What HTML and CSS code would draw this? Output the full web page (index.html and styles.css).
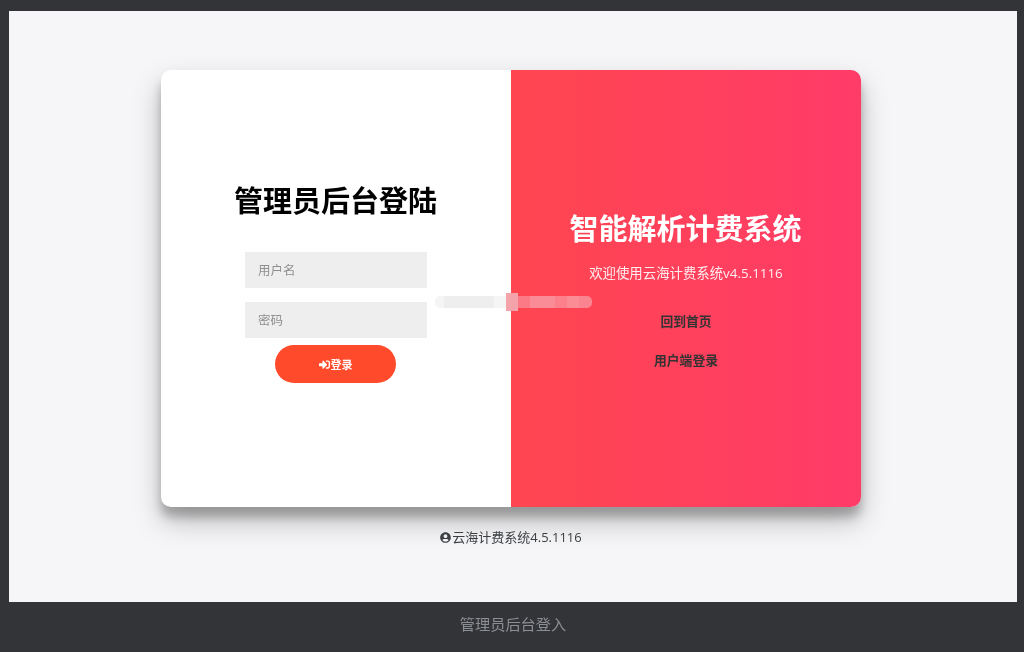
FILE: index.html
```html
<!DOCTYPE html>
<html lang="zh-CN">
<head>
<meta charset="utf-8">
<title>管理员后台登入</title>
<link rel="stylesheet" href="styles.css">
</head>
<body>
<main class="stage">
  <section class="card">
    <form class="login">
      <h1 class="login-title">管理员后台登陆</h1>
      <input class="field" type="text" placeholder="用户名">
      <input class="field field-second" type="password" placeholder="密码">
      <button class="submit" type="button">
        <svg class="submit-icon" viewBox="0 0 512 512"><path fill="currentColor" d="M416 448h-84c-6.6 0-12-5.4-12-12v-40c0-6.6 5.4-12 12-12h84c17.7 0 32-14.3 32-32V160c0-17.7-14.3-32-32-32h-84c-6.6 0-12-5.4-12-12V76c0-6.6 5.4-12 12-12h84c53 0 96 43 96 96v192c0 53-43 96-96 96zm-47-201L201 79c-15-15-41-4.5-41 17v96H24c-13.3 0-24 10.7-24 24v96c0 13.3 10.7 24 24 24h136v96c0 21.5 26 32 41 17l168-168c9.3-9.4 9.3-24.6 0-34z"/></svg>登录
      </button>
    </form>
    <aside class="promo">
      <h2 class="promo-title">智能解析计费系统</h2>
      <p class="promo-text">欢迎使用云海计费系统v4.5.1116</p>
      <a class="promo-link" href="#">回到首页</a>
      <a class="promo-link" href="#">用户端登录</a>
    </aside>
  </section>
  <p class="credit">
    <svg class="credit-icon" viewBox="0 0 496 512"><path fill="currentColor" d="M248 8C111 8 0 119 0 256s111 248 248 248 248-111 248-248S385 8 248 8zm0 96c48.6 0 88 39.4 88 88s-39.4 88-88 88-88-39.4-88-88 39.4-88 88-88zm0 344c-58.7 0-111.3-26.6-146.5-68.2 18.8-35.4 55.6-59.8 98.5-59.8 2.4 0 4.8.4 7.1 1.1 13 4.2 26.6 6.9 40.9 6.9 14.3 0 28-2.7 40.9-6.9 2.3-.7 4.7-1.1 7.1-1.1 42.9 0 79.7 24.4 98.5 59.8C359.3 421.4 306.7 448 248 448z"/></svg>云海计费系统4.5.1116
  </p>
  <div class="redaction" aria-hidden="true">
    <span class="seg seg-a"></span><span class="seg seg-b"></span><span class="seg seg-c"></span><span class="seg seg-d"></span><span class="seg seg-e"></span><span class="seg seg-f"></span><span class="seg seg-g"></span><span class="seg seg-h"></span><span class="seg seg-i"></span>
  </div>
</main>
<footer class="caption">管理员后台登入</footer>
</body>
</html>
```

FILE: styles.css
```css
* { box-sizing: border-box; }
html, body { height: 100%; }
body {
  margin: 0;
  height: 652px;
  padding: 11px 7px 0 9px;
  overflow: hidden;
  display: flex;
  flex-direction: column;
  background: #333437;
  font-family: "Open Sans", "Noto Sans CJK SC", sans-serif;
}
.stage {
  position: relative;
  height: 591px;
  flex: none;
  padding: 59px 4px 0 0;
  display: flex;
  flex-direction: column;
  align-items: center;
  background: #f6f6f8;
}
.card {
  width: 700px;
  height: 437px;
  flex: none;
  display: grid;
  grid-template-columns: 350px 350px;
  border-radius: 10px;
  overflow: hidden;
  background: #fff;
  box-shadow: 0 14px 28px rgba(0,0,0,.25), 0 10px 10px rgba(0,0,0,.22);
}
.login {
  display: flex;
  flex-direction: column;
  align-items: center;
  padding-top: 109px;
  filter: blur(.35px);
}
.login-title {
  margin: 0 1px 0 0;
  font-size: 29px;
  line-height: 44px;
  font-weight: 700;
  color: #000;
}
.field {
  width: 182px;
  height: 36px;
  margin-top: 29px;
  padding: 0 13px 2px;
  border: 0;
  background: #eee;
  font: 12.5px "Noto Sans CJK SC", sans-serif;
}
.field::placeholder { color: #8f8f8f; }
.field-second { margin-top: 14px; }
.submit {
  width: 121px;
  height: 38px;
  margin: 7px 1px 0 0;
  padding: 0;
  border: 0;
  border-radius: 20px;
  display: flex;
  align-items: center;
  justify-content: center;
  gap: 1px;
  background: #ff4b2b;
  color: #fff;
  font: 700 11px "Noto Sans CJK SC", sans-serif;
}
.submit-icon { width: 11px; height: 11px; }
.promo {
  display: flex;
  flex-direction: column;
  align-items: center;
  padding-top: 137px;
  background: linear-gradient(to right, #ff4650, #ff3b68);
}
.promo > * { filter: blur(.35px); }
.promo-title {
  margin: 0 1px 0 0;
  font-size: 29px;
  line-height: 44px;
  font-weight: 700;
  color: #fff;
}
.promo-text {
  margin: 12px 0 0;
  font-size: 13.4px;
  line-height: 20px;
  color: #fff;
  opacity: .9;
}
.promo-link {
  margin-top: 20px;
  font-size: 12.8px;
  line-height: 19px;
  font-weight: 700;
  color: #333;
  text-decoration: none;
}
.promo-text + .promo-link { margin-top: 29px; }
.credit {
  margin: 20px 0 0;
  display: flex;
  align-items: center;
  gap: 1px;
  font-size: 13px;
  line-height: 20px;
  color: #3c4043;
  filter: blur(.3px);
}
.credit-icon { width: 11px; height: 11px; }
.redaction {
  position: absolute;
  left: 426px;
  top: 282px;
  height: 18px;
  display: flex;
  align-items: center;
  filter: blur(.5px);
}
.seg { display: block; height: 12px; }
.seg-a { width: 9px; background: #f5f5f5; border-radius: 5px 0 0 5px; }
.seg-b { width: 50px; background: #eee; }
.seg-c { width: 12px; background: #f5f5f5; }
.seg-d { width: 12px; height: 18px; background: #f4a3ab; }
.seg-e { width: 12px; background: #fb7a85; }
.seg-f { width: 25px; background: #f98c96; }
.seg-g { width: 12px; background: #fb808b; }
.seg-h { width: 12px; background: #fb8b95; }
.seg-i { width: 13px; background: #fa8590; border-radius: 0 5px 5px 0; }
.caption {
  flex: none;
  height: 50px;
  margin: 0 -7px 0 -9px;
  padding: 0 0 8px 2px;
  display: flex;
  align-items: center;
  justify-content: center;
  font-size: 15.2px;
  color: #8b8e93;
  filter: blur(.3px);
}
```
